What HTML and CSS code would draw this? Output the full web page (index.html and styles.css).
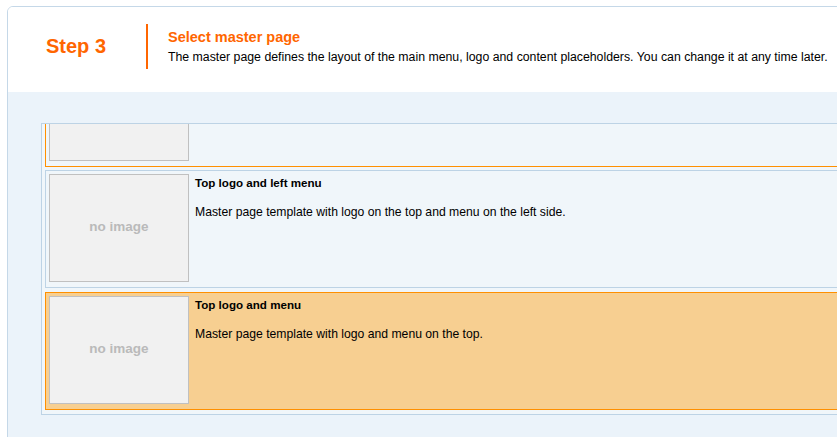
FILE: index.html
```html
<!DOCTYPE html>
<html lang="en">
<head>
  <meta charset="UTF-8" />
  <title>Select master page</title>
  <link rel="stylesheet" href="styles.css">
</head>
<body>
  <div class="wizard">
    <div class="wizard-header">
      <div class="step-label">Step 3</div>
      <div class="step-info">
        <div class="step-title">Select master page</div>
        <div class="step-text">The master page defines the layout of the main menu, logo and content placeholders. You can change it at any time later.</div>
      </div>
    </div>
    <div class="wizard-body">
      <div class="template-list">
        <div class="template-scroll">
          <div class="template hover">
            <div class="thumb"></div>
            <div class="template-info"></div>
          </div>
          <div class="template">
            <div class="thumb">no image</div>
            <div class="template-info">
              <div class="template-title">Top logo and left menu</div>
              <div class="template-text">Master page template with logo on the top and menu on the left side.</div>
            </div>
          </div>
          <div class="template selected">
            <div class="thumb">no image</div>
            <div class="template-info">
              <div class="template-title">Top logo and menu</div>
              <div class="template-text">Master page template with logo and menu on the top.</div>
            </div>
          </div>
        </div>
      </div>
    </div>
  </div>
</body>
</html>
```

FILE: styles.css
```css
body {
  margin: 0;
  overflow: hidden;
  background: #fff;
  font-family: "Liberation Sans", Arial, sans-serif;
  color: #000;
}
.wizard {
  margin: 6px 0 0 7px;
  width: 900px;
  border: 1px solid #c5d8e8;
  border-radius: 6px 0 0 0;
  overflow: hidden;
}
.wizard-header {
  display: flex;
  align-items: flex-start;
  height: 68px;
  padding: 17px 0 0 38px;
  background: #fff;
}
.step-label {
  width: 100px;
  padding-top: 10px;
  font-size: 20px;
  line-height: 24px;
  font-weight: bold;
  color: #ff6600;
}
.step-info {
  min-height: 45px;
  padding-left: 20px;
  border-left: 2px solid #ff6600;
}
.step-title {
  padding-top: 5px;
  font-size: 14.5px;
  line-height: 17px;
  font-weight: bold;
  color: #ff6600;
}
.step-text {
  margin-top: 4px;
  font-size: 12.3px;
  line-height: 15px;
  white-space: nowrap;
}
.wizard-body {
  height: 400px;
  padding: 31px 0 0 33px;
  background: #ebf3fa;
}
.template-list {
  height: 284px;
  padding: 3px;
  border: 1px solid #bdd3e5;
  background: #f0f6fa;
  overflow: hidden;
}
/* list is scrolled down a bit, first item only shows its bottom */
.template-scroll {
  margin-top: -78px;
}
.template {
  display: flex;
  gap: 6px;
  margin-bottom: 3px;
  padding: 3px 3px 5px;
  border: 1px solid #bdd3e5;
  background: #f0f6fa;
}
.template.hover {
  border-color: #ff9000;
}
.template.selected {
  margin-top: 4px;
  border-color: #ff9000;
  background: #f7cf91;
}
.thumb {
  display: flex;
  align-items: center;
  justify-content: center;
  flex: none;
  width: 140px;
  height: 108px;
  box-sizing: border-box;
  padding-bottom: 4px;
  border: 1px solid #c0c0c0;
  background: #f1f1f1;
  color: #bababa;
  font-size: 13.5px;
  font-weight: bold;
}
.template-title {
  margin-top: 2px;
  font-size: 11.6px;
  line-height: 13px;
  font-weight: bold;
}
.template-text {
  margin-top: 16px;
  font-size: 12.2px;
  line-height: 14px;
}
```
